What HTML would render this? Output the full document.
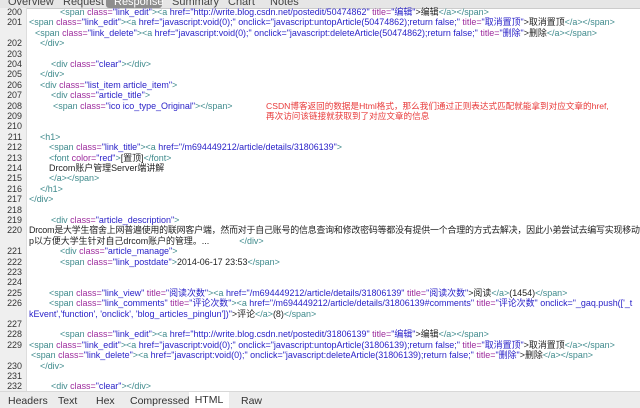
<!DOCTYPE html><html><head><meta charset="utf-8"><style>
html,body{margin:0;width:640px;height:408px;overflow:hidden}
body{background:#fff;font-family:"Liberation Sans","Noto Sans CJK SC",sans-serif;font-size:8.95px;position:relative}
.top{position:absolute;left:0;top:0;width:640px;height:8px;background:#e6e6e6;overflow:hidden;border-bottom:1px solid #ccc}
.top span{position:absolute;top:-4px;font-size:11px;color:#444}
.gut{position:absolute;left:0;top:8px;width:26px;height:383px;background:#efefef;border-right:1px solid #ddd}
.r{position:absolute;white-space:nowrap;line-height:10.4px;color:#222}
.n{position:absolute;width:22px;text-align:right;left:0;line-height:10.4px;color:#333}
.t{color:#3f8a8c}.a{color:#9c2a9c}.v{color:#2a22c8}.red{color:#e83a3a}
.bot{position:absolute;left:0;top:391px;width:640px;height:17px;background:#ececec;border-top:1px solid #d8d8d8}
.bot span{position:absolute;top:3px;font-size:10.5px;color:#333}
</style></head><body>
<div class="top"><span style="left:8px">Overview</span><span style="left:63px">Request</span><span style="left:106px;width:56px;height:12px;background:#8e8e8e;color:#fff;border-radius:3px;padding-left:8px;box-sizing:border-box">Response</span><span style="left:172px">Summary</span><span style="left:228px">Chart</span><span style="left:270px">Notes</span></div>
<div class="gut"></div>
<div class="n" style="top:7px">200</div><div class="r" style="left:60px;top:7px"><span class="t">&lt;span</span> <span class="a">class=</span><span class="v">"link_edit"</span><span class="t">&gt;&lt;a</span> <span class="v">href="http://write.blog.csdn.net/postedit/50474862"</span> <span class="a">title=</span><span class="v">"编辑"</span>&gt;编辑<span class="t">&lt;/a&gt;&lt;/span&gt;</span></div>
<div class="n" style="top:17.4px">201</div><div class="r" style="left:29px;top:17.4px"><span class="t">&lt;span</span> <span class="a">class=</span><span class="v">"link_edit"</span><span class="t">&gt;&lt;a</span> <span class="v">href="javascript:void(0);" onclick="javascript:untopArticle(50474862);return false;"</span> <span class="a">title=</span><span class="v">"取消置顶"</span>&gt;取消置顶<span class="t">&lt;/a&gt;&lt;/span&gt;</span></div>
<div class="r" style="left:35px;top:27.8px"><span class="t">&lt;span</span> <span class="a">class=</span><span class="v">"link_delete"</span><span class="t">&gt;&lt;a</span> <span class="v">href="javascript:void(0);" onclick="javascript:deleteArticle(50474862);return false;"</span> <span class="a">title=</span><span class="v">"删除"</span>&gt;删除<span class="t">&lt;/a&gt;&lt;/span&gt;</span></div>
<div class="n" style="top:38.2px">202</div><div class="r t" style="left:40px;top:38.2px">&lt;/div&gt;</div>
<div class="n" style="top:48.6px">203</div>
<div class="n" style="top:59px">204</div><div class="r" style="left:51px;top:59px"><span class="t">&lt;div</span> <span class="a">class=</span><span class="v">"clear"</span><span class="t">&gt;&lt;/div&gt;</span></div>
<div class="n" style="top:69.4px">205</div><div class="r t" style="left:40px;top:69.4px">&lt;/div&gt;</div>
<div class="n" style="top:79.8px">206</div><div class="r" style="left:40px;top:79.8px"><span class="t">&lt;div</span> <span class="a">class=</span><span class="v">"list_item article_item"</span><span class="t">&gt;</span></div>
<div class="n" style="top:90.2px">207</div><div class="r" style="left:51px;top:90.2px"><span class="t">&lt;div</span> <span class="a">class=</span><span class="v">"article_title"</span><span class="t">&gt;</span></div>
<div class="n" style="top:100.6px">208</div><div class="r" style="left:53px;top:100.6px"><span class="t">&lt;span</span> <span class="a">class=</span><span class="v">"ico ico_type_Original"</span><span class="t">&gt;&lt;/span&gt;</span></div>
<div class="r red" style="left:266px;top:100.6px;font-size:8.6px">CSDN博客返回的数据是Html格式，那么我们通过正则表达式匹配就能拿到对应文章的href,</div>
<div class="n" style="top:111px">209</div>
<div class="r red" style="left:266px;top:111px;font-size:8.6px">再次访问该链接就获取到了对应文章的信息</div>
<div class="n" style="top:121.4px">210</div>
<div class="n" style="top:131.8px">211</div><div class="r t" style="left:40px;top:131.8px">&lt;h1&gt;</div>
<div class="n" style="top:142.2px">212</div><div class="r" style="left:49px;top:142.2px"><span class="t">&lt;span</span> <span class="a">class=</span><span class="v">"link_title"</span><span class="t">&gt;&lt;a</span> <span class="v">href="/m694449212/article/details/31806139"</span><span class="t">&gt;</span></div>
<div class="n" style="top:152.6px">213</div><div class="r" style="left:49px;top:152.6px"><span class="t">&lt;font</span> <span class="a">color=</span><span class="v">"red"</span><span class="t">&gt;</span>[置顶]<span class="t">&lt;/font&gt;</span></div>
<div class="n" style="top:163px">214</div><div class="r" style="left:49px;top:163px">Drcom账户管理Server端讲解</div>
<div class="n" style="top:173.4px">215</div><div class="r t" style="left:49px;top:173.4px">&lt;/a&gt;&lt;/span&gt;</div>
<div class="n" style="top:183.8px">216</div><div class="r t" style="left:40px;top:183.8px">&lt;/h1&gt;</div>
<div class="n" style="top:194.2px">217</div><div class="r t" style="left:29px;top:194.2px">&lt;/div&gt;</div>
<div class="n" style="top:204.6px">218</div>
<div class="n" style="top:215px">219</div><div class="r" style="left:51px;top:215px"><span class="t">&lt;div</span> <span class="a">class=</span><span class="v">"article_description"</span><span class="t">&gt;</span></div>
<div class="n" style="top:225.4px">220</div><div class="r" style="left:29px;top:225.4px;letter-spacing:-0.2px">Drcom是大学生宿舍上网普遍使用的联网客户端，然而对于自己账号的信息查询和修改密码等都没有提供一个合理的方式去解决，因此小弟尝试去编写实现移动端的</div>
<div class="r" style="left:29px;top:235.8px">p以方便大学生针对自己drcom账户的管理。...<span class="t" style="margin-left:30px">&lt;/div&gt;</span></div>
<div class="n" style="top:246.2px">221</div><div class="r" style="left:60px;top:246.2px"><span class="t">&lt;div</span> <span class="a">class=</span><span class="v">"article_manage"</span><span class="t">&gt;</span></div>
<div class="n" style="top:256.6px">222</div><div class="r" style="left:60px;top:256.6px"><span class="t">&lt;span</span> <span class="a">class=</span><span class="v">"link_postdate"</span><span class="t">&gt;</span>2014-06-17 23:53<span class="t">&lt;/span&gt;</span></div>
<div class="n" style="top:267px">223</div>
<div class="n" style="top:277.4px">224</div>
<div class="n" style="top:287.8px">225</div><div class="r" style="left:49px;top:287.8px"><span class="t">&lt;span</span> <span class="a">class=</span><span class="v">"link_view"</span> <span class="a">title=</span><span class="v">"阅读次数"</span><span class="t">&gt;&lt;a</span> <span class="v">href="/m694449212/article/details/31806139"</span> <span class="a">title=</span><span class="v">"阅读次数"</span>&gt;阅读<span class="t">&lt;/a&gt;</span>(1454)<span class="t">&lt;/span&gt;</span></div>
<div class="n" style="top:298.2px">226</div><div class="r" style="left:49px;top:298.2px"><span class="t">&lt;span</span> <span class="a">class=</span><span class="v">"link_comments"</span> <span class="a">title=</span><span class="v">"评论次数"</span><span class="t">&gt;&lt;a</span> <span class="v">href="/m694449212/article/details/31806139#comments"</span> <span class="a">title=</span><span class="v">"评论次数"</span> <span class="v">onclick="_gaq.push(['_t</span></div>
<div class="r v" style="left:29px;top:308.6px">kEvent','function', 'onclick', 'blog_articles_pinglun'])"<span style="color:#222">&gt;评论</span><span class="t">&lt;/a&gt;</span><span style="color:#222">(8)</span><span class="t">&lt;/span&gt;</span></div>
<div class="n" style="top:319px">227</div>
<div class="n" style="top:329.4px">228</div><div class="r" style="left:60px;top:329.4px"><span class="t">&lt;span</span> <span class="a">class=</span><span class="v">"link_edit"</span><span class="t">&gt;&lt;a</span> <span class="v">href="http://write.blog.csdn.net/postedit/31806139"</span> <span class="a">title=</span><span class="v">"编辑"</span>&gt;编辑<span class="t">&lt;/a&gt;&lt;/span&gt;</span></div>
<div class="n" style="top:339.8px">229</div><div class="r" style="left:29px;top:339.8px"><span class="t">&lt;span</span> <span class="a">class=</span><span class="v">"link_edit"</span><span class="t">&gt;&lt;a</span> <span class="v">href="javascript:void(0);" onclick="javascript:untopArticle(31806139);return false;"</span> <span class="a">title=</span><span class="v">"取消置顶"</span>&gt;取消置顶<span class="t">&lt;/a&gt;&lt;/span&gt;</span></div>
<div class="r" style="left:31px;top:350.2px"><span class="t">&lt;span</span> <span class="a">class=</span><span class="v">"link_delete"</span><span class="t">&gt;&lt;a</span> <span class="v">href="javascript:void(0);" onclick="javascript:deleteArticle(31806139);return false;"</span> <span class="a">title=</span><span class="v">"删除"</span>&gt;删除<span class="t">&lt;/a&gt;&lt;/span&gt;</span></div>
<div class="n" style="top:360.6px">230</div><div class="r t" style="left:40px;top:360.6px">&lt;/div&gt;</div>
<div class="n" style="top:371px">231</div>
<div class="n" style="top:381.4px">232</div><div class="r" style="left:51px;top:381.4px"><span class="t">&lt;div</span> <span class="a">class=</span><span class="v">"clear"</span><span class="t">&gt;&lt;/div&gt;</span></div>
<div class="bot"><span style="left:8px">Headers</span><span style="left:58px">Text</span><span style="left:96px">Hex</span><span style="left:130px">Compressed</span><span style="left:189px;top:0;height:17px;width:40px;background:#fff;text-align:center;line-height:17px">HTML</span><span style="left:241px">Raw</span></div>
</body></html>
